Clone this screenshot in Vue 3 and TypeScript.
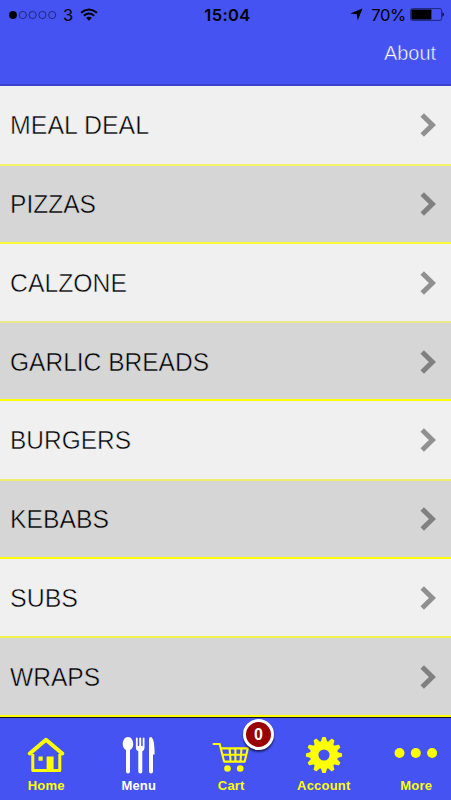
<script setup lang="ts">
interface Row { label: string; height: number; tone: string; width: number }

const rows: Row[] = [
  { label: 'MEAL DEAL', height: 80, tone: '#f3f367', width: 139 },
  { label: 'PIZZAS', height: 78, tone: '#fafa35', width: 86 },
  { label: 'CALZONE', height: 79, tone: '#e9e98b', width: 117 },
  { label: 'GARLIC BREADS', height: 78, tone: '#ffff05', width: 199 },
  { label: 'BURGERS', height: 80, tone: '#eeee6e', width: 121 },
  { label: 'KEBABS', height: 78, tone: '#ffff0c', width: 99 },
  { label: 'SUBS', height: 79, tone: '#f2f24d', width: 68 },
  { label: 'WRAPS', height: 79, tone: '#ffff00', width: 90 },
]

const teeth = 12
const gear = Array.from({ length: teeth * 4 }, (_, i) => {
  const offsets = [-0.34, -0.12, 0.12, 0.34]
  const radii = [13.2, 17.3, 17.3, 13.2]
  const angle = ((Math.floor(i / 4) + offsets[i % 4]) / teeth) * Math.PI * 2
  const r = radii[i % 4]
  return `${(19 + r * Math.sin(angle)).toFixed(2)},${(19 - r * Math.cos(angle)).toFixed(2)}`
}).join(' ')
</script>

<template>
  <main class="screen">
    <header class="header">
      <div class="status">
        <div class="carrier">
          <svg width="48" height="10" viewBox="0 0 48 10">
            <circle cx="4" cy="5" r="3.9" />
            <g fill="none" stroke="#10133f" stroke-width=".65">
              <circle v-for="n in 4" :key="n" :cx="4 + n * 9.8" cy="5" r="3.6" />
            </g>
          </svg>
          <span class="network">3</span>
          <svg class="wifi" width="18" height="13" viewBox="0 0 18 13">
            <g fill="none" stroke="#000" stroke-width="2">
              <path d="M1 4.7Q9-1.8 17 4.7M3.8 7.7Q9 3.4 14.2 7.7" />
            </g>
            <path d="M6.1 9.7Q9 7.6 11.9 9.7L9 12.7z" />
          </svg>
        </div>
        <span class="time">15:04</span>
        <div class="power">
          <svg width="13" height="13" viewBox="0 0 13 13"><path d="M12.5.5 7.7 12.5 6.8 6.3.2 5.4z" /></svg>
          <span class="percent">70%</span>
          <svg width="35" height="13" viewBox="0 0 35 13">
            <rect x=".6" y=".6" width="31" height="11.8" rx="1.8" fill="none" stroke="#161a59" stroke-width=".8" />
            <rect x="1.4" y="1.5" width="20" height="10" rx=".8" />
            <path d="M32.500 4q2.600 2.500 0 5z" />
          </svg>
        </div>
      </div>
      <div class="about"><svg width="60" height="32"><text x="4" y="23" textLength="52" lengthAdjust="spacingAndGlyphs">About</text></svg></div>
    </header>

    <section class="list">
      <div v-for="row in rows" :key="row.label" class="row" :style="{ height: row.height + 'px', borderBottomColor: row.tone }">
        <svg class="label" width="230" height="30">
          <text x="0" y="24" :textLength="row.width" lengthAdjust="spacingAndGlyphs">{{ row.label }}</text>
        </svg>
        <svg class="chevron" width="17" height="24" viewBox="0 0 17 24">
          <path d="M2.200 2 12.400 12 2.200 22" fill="none" stroke="#000" stroke-opacity=".4" stroke-width="5" />
        </svg>
      </div>
    </section>

    <nav class="tabs">
      <div class="tab">
        <svg class="icon" width="38" height="38" viewBox="0 0 38 38">
          <path d="M2.800 17.500 19 3.800 35.200 17.500" fill="none" stroke="#ff0" stroke-width="4" stroke-linejoin="round" stroke-linecap="round" />
          <path d="M5.800 18v16.500h27V18" fill="none" stroke="#ff0" stroke-width="3" stroke-linejoin="round" />
          <path d="M11.500 20.500h4.200v4.200h-4.200zM19.600 20.500h7v14h-7z" />
        </svg>
        <span>Home</span>
      </div>
      <div class="tab active">
        <svg class="icon" width="38" height="38" viewBox="0 0 38 38">
          <path d="M8 1c3.600 0 5.500 4.100 5.200 8-.2 2.400-1.500 4.200-3.200 5v21.500a2 2 0 0 1-4 0V14C4.300 13.200 3 11.400 2.800 9 2.500 5.100 4.400 1 8 1z" />
          <path d="M15.900 2.400a.9.9 0 0 1 1.800 0V10h1.500V2.400a1 1 0 0 1 2 0V10h1.500V2.400a.9.9 0 0 1 1.800 0V12q0 2.600-2.200 3.300v20.200a2 2 0 0 1-4 0V15.300q-2.400-.7-2.400-3.300z" />
          <path d="M29 3q0-2 1.900-1.900Q34.600 2 34.600 18.500H33v17a2 2 0 0 1-4 0z" />
        </svg>
        <span>Menu</span>
      </div>
      <div class="tab">
        <svg class="icon" width="38" height="38" viewBox="0 0 38 38">
          <path d="M1.500 8h6.200l4.400 17.600h20.600M8.800 12.400h27L32.700 25.600M10.700 18.700h23.600M17.600 12.400l1 13M23.400 12.400v13M29.500 12.400l-1 13" fill="none" stroke="#ff0" stroke-width="2.100" stroke-linejoin="round" stroke-linecap="round" />
          <circle cx="15.500" cy="32.500" r="3.300" /><circle cx="28.200" cy="32.500" r="3.300" />
        </svg>
        <span>Cart</span>
        <b class="badge">0</b>
      </div>
      <div class="tab">
        <svg class="icon" width="38" height="38" viewBox="0 0 38 38">
          <polygon :points="gear" stroke="#ff0" stroke-width="1.600" stroke-linejoin="round" />
          <circle cx="19" cy="19" r="5.600" fill="#4453f1" />
        </svg>
        <span>Account</span>
      </div>
      <div class="tab">
        <svg class="icon" width="44" height="38" viewBox="0 0 44 38">
          <circle v-for="x in [5.5, 21.8, 38.1]" :key="x" :cx="x" cy="17" r="5" />
        </svg>
        <span>More</span>
      </div>
    </nav>
  </main>
</template>

<style>
body { margin: 0; background: #4453f1; }
</style>

<style scoped>
.screen { width: 451px; height: 800px; display: flex; flex-direction: column; overflow: hidden; font-family: "Liberation Sans", Arial, sans-serif; background: #4453f1; }
svg { display: block; flex: none; }
.header { box-sizing: border-box; height: 86px; flex: none; border-bottom: 2px solid #3a43c9; }
.status { height: 29px; display: grid; grid-template-columns: 1fr auto 1fr; align-items: center; padding: 0 6px 0 9px; font-family: Inter, sans-serif; font-size: 16.500px; }
.carrier, .power { display: flex; align-items: center; }
.network { margin-left: 6px; width: 11px; }
.wifi { margin-left: 6px; }
.time { font-weight: 600; font-size: 16.500px; letter-spacing: .4px; padding-left: 1px; }
.power { justify-content: flex-end; }
.percent { margin: 0 4px 0 8px; letter-spacing: -.3px; }
.about { display: flex; justify-content: flex-end; margin-top: 8px; padding-right: 11px; }
.about text { font-size: 20.500px; fill: #fff; stroke: #4453f1; stroke-width: .5px; }
.list { flex: none; }
.row { box-sizing: border-box; display: flex; align-items: center; justify-content: space-between; padding: 1px 15px 0 10px; border-bottom: 2px solid; background: #f0f0f0; }
.row:nth-child(4n + 1), .row:nth-child(4n + 2) { padding-top: 0; padding-bottom: 1px; }
.label text { font-size: 26px; fill: #000; stroke: #f0f0f0; stroke-width: .5px; }
.row:nth-child(even) { background: #d6d6d6; }
.row:nth-child(even) .label text { stroke: #d6d6d6; }
.chevron { margin-right: -1px; }
.tabs { box-sizing: border-box; height: 83px; flex: none; display: grid; grid-template-columns: repeat(5, 92.500px); border-top: 1px solid #101232; }
.tab { position: relative; display: flex; flex-direction: column; align-items: center; padding-top: 18px; color: #ff0; fill: #ff0; font-size: 13px; font-weight: 700; }
.tab span { margin-top: 4px; line-height: 16px; letter-spacing: .2px; }
.active { color: #fff; fill: #fff; }
.badge { position: absolute; left: 58px; top: 1px; box-sizing: border-box; width: 31px; height: 31px; border: 3px solid #fff; border-radius: 50%; background: #900; color: #fff; line-height: 25px; text-align: center; font-size: 16px; box-shadow: 0 2px 2px #0009; }
</style>
